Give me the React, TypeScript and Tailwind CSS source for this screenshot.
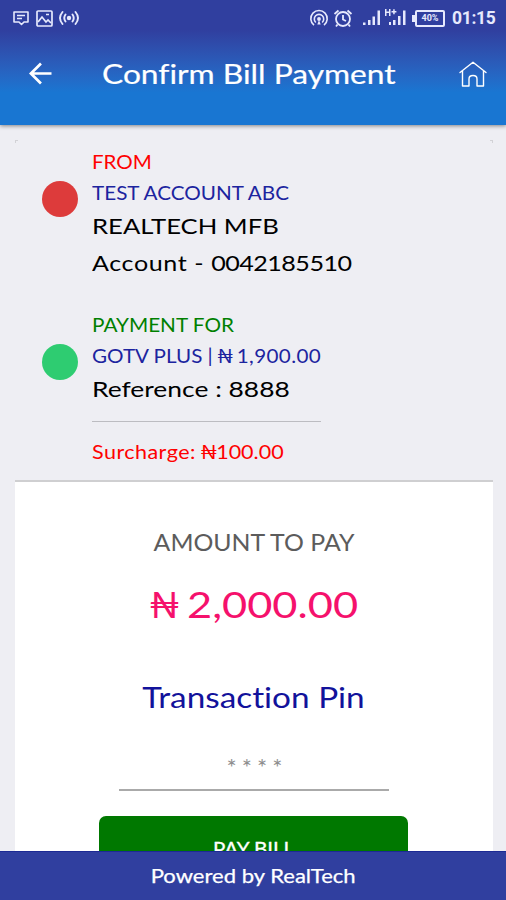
import type { ReactNode } from "react";

function StatusBar() {
  return (
    <div className="flex h-[36px] items-center pl-[13px] pr-[11px] text-[#e6e9fd]">
      <svg className="h-[16px] w-[16px]" viewBox="0 0 16 16" fill="none" stroke="currentColor" strokeWidth="1.6">
        <path d="M1 2h14v10h-4l-2.500 2.500L6 12H1z" strokeLinejoin="round" />
        <path d="M4 5.500h8M4 8.500h5" />
      </svg>
      <svg className="ml-[7px] h-[17px] w-[17px]" viewBox="0 0 17 17" fill="none" stroke="currentColor" strokeWidth="1.7">
        <rect x="1" y="1" width="15" height="15" rx="1" />
        <path d="M2 12l4-5 4 5 2-2 3 3M10 4.500h3" />
      </svg>
      <svg className="ml-[5px] h-[16px] w-[22px]" viewBox="0 0 22 16" fill="none" stroke="currentColor" strokeWidth="1.9" strokeLinecap="round">
        <circle cx="11" cy="8" r="2.200" fill="currentColor" stroke="none" />
        <path d="M7.500 4.500q-2.500 3.500 0 7M14.500 4.500q2.500 3.500 0 7M4.500 2q-5 6 0 12M17.500 2q5 6 0 12" />
      </svg>
      <div className="flex-1" />
      <svg className="h-[18px] w-[20px]" viewBox="0 0 20 18" fill="none" stroke="currentColor" strokeWidth="1.6">
        <path d="M5 16.200a8.200 8.200 0 1 1 10 0M6.800 13.500a4.700 4.700 0 1 1 6.400 0" />
        <circle cx="10" cy="10" r="1.900" fill="currentColor" stroke="none" />
        <path d="M8.300 15.500l1.700-4.500 1.700 4.500z" fill="currentColor" stroke="none" />
      </svg>
      <svg className="ml-[4px] h-[19px] w-[20px]" viewBox="0 0 20 19" fill="none" stroke="currentColor" strokeWidth="1.8">
        <circle cx="10" cy="10" r="7" />
        <path d="M10 6v4.500l3 1.500M1.500 5l4-3.500M18.500 5l-4-3.500M4.500 15.500L3 17.500M15.500 15.500l1.500 2" />
      </svg>
      <svg className="ml-[9px] h-[20px] w-[45px]" viewBox="0 0 45 20" fill="currentColor">
        <path d="M1 14.500h2.500V17H1zM6 12h2.500v5H6zM10.500 8.500H13V17h-2.500zM15.500 2.500H18V17h-2.500z" />
        <path d="M27 14h2v3h-2zM31 12h2.500v5H31zM36 8h2.500v9H36zM41 2.500h2.500V17H41z" />
        <path d="M23 1h1.500v2.500H27V1h1.500v7H27V5h-2.500v3H23zM29.500 3h1.700V1.300h1.500V3h1.700v1.500h-1.700v1.800h-1.500V4.500h-1.700z" />
      </svg>
      <div className="ml-[5px] flex items-center">
        <div className="h-[7px] w-[3px] bg-current" />
        <div className="flex h-[17px] w-[30px] items-center justify-center rounded-[2px] border-2 border-current font-['Roboto',sans-serif] text-[9px] font-bold leading-none">
          40%
        </div>
      </div>
      <div className="ml-[7px] w-[43px] whitespace-nowrap pt-px font-['Roboto',sans-serif] text-[17.5px] font-bold leading-none tracking-[-0.300px]">
        01:15
      </div>
    </div>
  );
}

function Header() {
  return (
    <header className="relative h-[125px] shrink-0 bg-linear-to-b from-[#303f9f] from-24% to-[#1976d2] to-74% text-white shadow-[0_1px_4px_rgba(0,0,0,0.450)]">
      <StatusBar />
      <div className="flex h-[75px] items-center pl-[28px] pr-[19px]">
        <svg className="h-[23px] w-[24px]" viewBox="0 0 24 24" fill="none" stroke="currentColor" strokeWidth="2.800">
          <path d="M24 12H3M13 1.500L2.500 12 13 22.500" />
        </svg>
        <h1 className="ml-[50px] origin-left scale-x-[1.175] whitespace-nowrap text-[27px] leading-none [-webkit-text-stroke:0.2px_white]">
          Confirm Bill Payment
        </h1>
        <div className="flex-1" />
        <svg className="h-[26px] w-[28px]" viewBox="0 0 28 26" fill="none" stroke="currentColor" strokeWidth="1.4" strokeLinejoin="round" strokeLinecap="round">
          <path d="M1 11.500L14 1.200l13 10.300M3.500 10v15H10v-7q0-3.500 4-3.500t4 3.500v7h6.500V10" />
        </svg>
      </div>
    </header>
  );
}

function Line({ className, children }: { className: string; children: ReactNode }) {
  return <p className={`origin-left whitespace-nowrap ${className}`}>{children}</p>;
}

export default function App() {
  return (
    <div className="flex h-[900px] w-[506px] flex-col overflow-hidden bg-[#eeeef3] font-['Lato','Open_Sans',sans-serif] [font-variant-ligatures:none]">
      <Header />
      <main className="min-h-0 flex-1 overflow-hidden pl-[15px] pr-[13px]">
        <div className="mt-[15px] flex h-[7px] justify-between">
          <span className="h-[3px] w-[3px] border-l border-t border-[#d2d2d6]" />
          <span className="h-[3px] w-[3px] border-r border-t border-[#d2d2d6]" />
        </div>
        <section className="h-[333px] px-[27px]">
          <div className="flex h-[163px] gap-[14px]">
            <div className="mt-[34px] size-[36px] rounded-full bg-[#dd3b3b]" />
            <div className="w-[229px]">
              <Line className="h-[30px] scale-x-[1.110] text-[18.5px] leading-[31px] text-[#ff0000]">FROM</Line>
              <Line className="h-[31px] scale-x-[1.117] text-[18.5px] leading-[32px] text-[#1c249f]">TEST ACCOUNT ABC</Line>
              <Line className="h-[37px] scale-x-[1.193] text-[21.5px] leading-[37px] text-black">REALTECH MFB</Line>
              <Line className="h-[37px] scale-x-[1.167] text-[21.5px] leading-[37px] text-black">
                <span className="tracking-[0.5px]">Account - </span>
                <span className="tracking-[-0.45px]">0042185510</span>
              </Line>
            </div>
          </div>
          <div className="flex gap-[14px]">
            <div className="mt-[34px] size-[36px] rounded-full bg-[#2ecc71]" />
            <div className="w-[229px]">
              <Line className="h-[30px] scale-x-[1.120] text-[18.5px] leading-[31px] text-[#008000]">PAYMENT FOR</Line>
              <Line className="h-[31px] scale-x-[1.114] text-[18.5px] leading-[32px] text-[#1c249f]">
                GOTV PLUS |<span className="tracking-[-0.9px]"> ₦ </span><span className="tracking-[0.350px]">1,900.00</span>
              </Line>
              <Line className="h-[37px] scale-x-[1.229] text-[21.5px] leading-[37px] text-black">Reference : 8888</Line>
              <hr className="mt-[13px] border-[#bcbcc1]" />
              <Line className="mt-[15px] h-[30px] scale-x-[1.163] text-[18.5px] leading-[30px] text-[#ff0000]">
                <span className="tracking-[0.400px]">Surcharge:</span><span className="tracking-[-1px]"> ₦</span>100.00
              </Line>
            </div>
          </div>
        </section>
        <section className="flex h-[420px] flex-col items-center border-t-2 border-[#cfcfd1] bg-white">
          <p className="mt-[45px] h-[30px] scale-x-[1.080] whitespace-nowrap text-[23px] leading-[30px] text-[#5c5c5c]">AMOUNT TO PAY</p>
          <p className="mr-[3px] mt-[22px] flex h-[50px] w-[208px] whitespace-pre text-[36px] leading-[50px] text-[#f5116c]">
            <span className="w-[38px] origin-left scale-x-[1.080]">₦</span>
            <span className="origin-left scale-x-[1.205]">2,000.00</span>
          </p>
          <p className="mr-[2px] mt-[48px] h-[40px] scale-x-[1.190] whitespace-nowrap text-[28px] leading-[40px] text-[#12129b]">Transaction Pin</p>
          <div className="mt-[33px] flex h-[41px] w-[270px] justify-center gap-[5px] border-b-2 border-[#aaaaaa] pl-px text-[24px] leading-[33px] text-[#8e8e8e]">
            <span>*</span><span>*</span><span>*</span><span>*</span>
          </div>
          <button className="mr-px mt-[25px] flex h-[68px] w-[309px] shrink-0 items-center justify-center rounded-[7px] bg-[#007800] text-[18.5px] text-white">
            <span className="scale-x-[1.11] [-webkit-text-stroke:0.3px_white]">PAY BILL</span>
          </button>
        </section>
      </main>
      <footer className="flex h-[49px] shrink-0 items-center justify-center border-t border-[#1c2a94] bg-[#303f9f] text-[19.5px] text-white">
        <span className="translate-x-[0.5px] scale-x-[1.130] whitespace-nowrap [-webkit-text-stroke:0.25px_white]">Powered by RealTech</span>
      </footer>
    </div>
  );
}
